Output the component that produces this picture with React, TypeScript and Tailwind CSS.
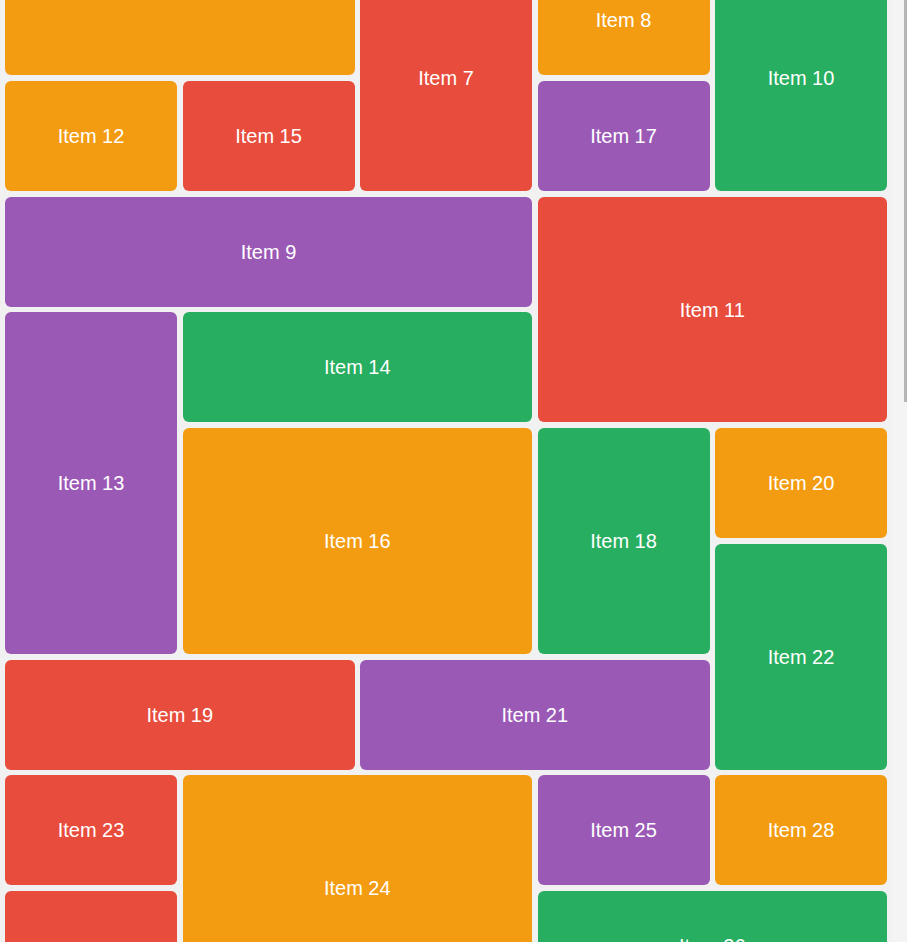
import React, { useLayoutEffect, useRef } from "react";

// colour cycles with the item number
const colorFor = (n: number) =>
  ["bg-[#f39c12]", "bg-[#9b59b6]", "bg-[#27ae60]", "bg-[#e74c3c]"][n % 4];

const tiles: { n: number; place: string }[] = [
  { n: 1, place: "col-start-1 col-span-2 row-start-1" },
  { n: 2, place: "col-start-3 row-start-1" },
  { n: 3, place: "col-start-4 col-span-2 row-start-1" },
  { n: 4, place: "col-start-1 col-span-2 row-start-2 row-span-2" },
  { n: 5, place: "col-start-3 row-start-2" },
  { n: 6, place: "col-start-4 col-span-2 row-start-2" },
  { n: 7, place: "col-start-3 row-start-3 row-span-2" },
  { n: 8, place: "col-start-4 row-start-3" },
  { n: 9, place: "col-start-1 col-span-3 row-start-5" },
  { n: 10, place: "col-start-5 row-start-3 row-span-2" },
  { n: 11, place: "col-start-4 col-span-2 row-start-5 row-span-2" },
  { n: 12, place: "col-start-1 row-start-4" },
  { n: 13, place: "col-start-1 row-start-6 row-span-3" },
  { n: 14, place: "col-start-2 col-span-2 row-start-6" },
  { n: 15, place: "col-start-2 row-start-4" },
  { n: 16, place: "col-start-2 col-span-2 row-start-7 row-span-2" },
  { n: 17, place: "col-start-4 row-start-4" },
  { n: 18, place: "col-start-4 row-start-7 row-span-2" },
  { n: 19, place: "col-start-1 col-span-2 row-start-9" },
  { n: 20, place: "col-start-5 row-start-7" },
  { n: 21, place: "col-start-3 col-span-2 row-start-9" },
  { n: 22, place: "col-start-5 row-start-8 row-span-2" },
  { n: 23, place: "col-start-1 row-start-10" },
  { n: 24, place: "col-start-2 col-span-2 row-start-10 row-span-2" },
  { n: 25, place: "col-start-4 row-start-10" },
  { n: 26, place: "col-start-4 col-span-2 row-start-11" },
  { n: 27, place: "col-start-1 row-start-11 row-span-2" },
  { n: 28, place: "col-start-5 row-start-10" },
  { n: 29, place: "col-start-2 col-span-2 row-start-12" },
  { n: 30, place: "col-start-4 row-start-12" },
];

export default function App() {
  const scroller = useRef<HTMLDivElement>(null);

  // the view is scrolled part way down the grid
  useLayoutEffect(() => {
    if (scroller.current) scroller.current.scrollTop = 271;
  }, []);

  return (
    <div className="flex h-screen overflow-hidden bg-[#f1f1f1] font-['Liberation_Sans',Arial,sans-serif]">
      <div ref={scroller} className="flex-1 overflow-hidden">
        <div className="grid grid-cols-5 auto-rows-[110px] gap-x-[5.5px] gap-y-[5.7px] p-[5px]">
          {tiles.map((t) => (
            <div
              key={t.n}
              className={`${t.place} ${colorFor(t.n)} flex items-center justify-center rounded-md text-[20px] text-white`}
            >
              Item {t.n}
            </div>
          ))}
        </div>
      </div>
      <div className="flex w-[15px] shrink-0 justify-end bg-[#f4f4f4]">
        <div className="h-[402px] w-[3px] bg-[#b5b5b5]" />
      </div>
    </div>
  );
}
